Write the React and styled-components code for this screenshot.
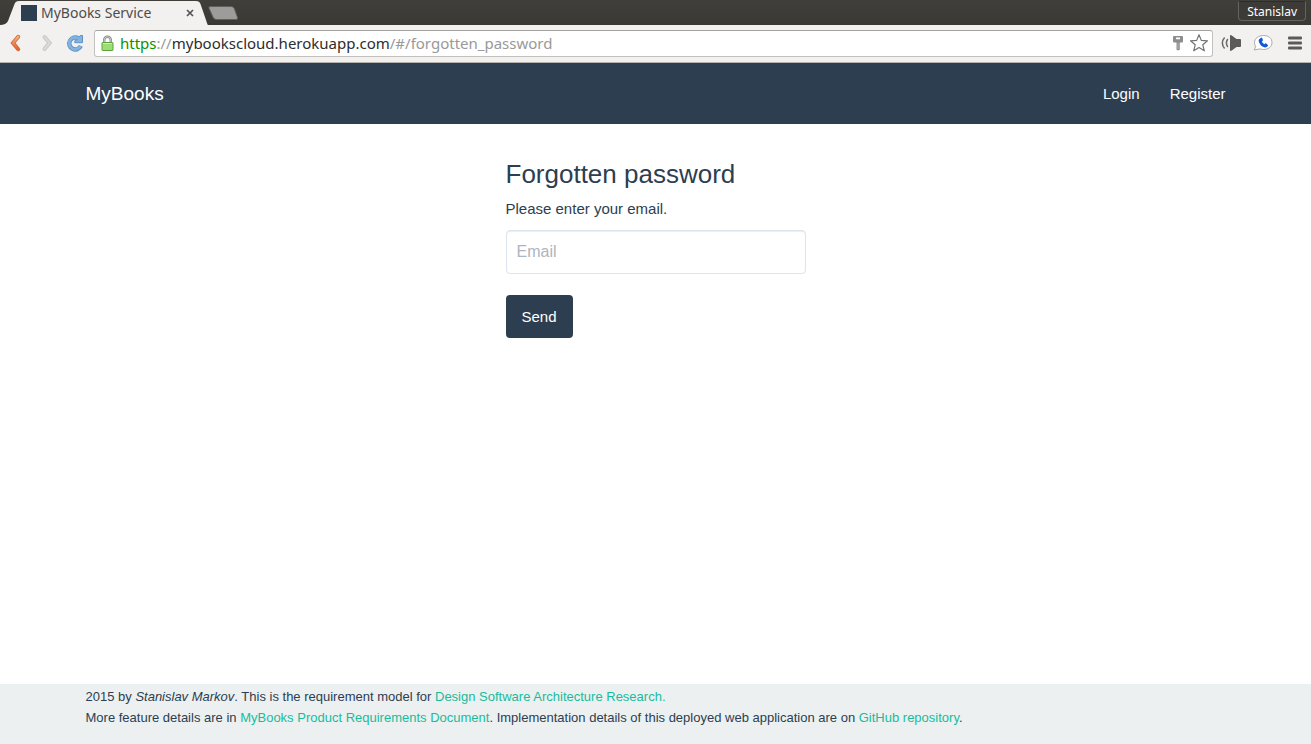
import React from "react";
import styled, { createGlobalStyle } from "styled-components";

const navy = "#2c3e50";
const uiFont = '"Noto Sans", "Open Sans", sans-serif';

const GlobalStyle = createGlobalStyle`
  *, *::before, *::after { box-sizing: border-box; }
  body {
    margin: 0;
    background: #fff;
    color: ${navy};
    font-family: "Liberation Sans", Arial, sans-serif;
    font-size: 15px;
    line-height: 21px;
  }
`;

const Window = styled.div`
  min-height: 100vh;
  display: flex;
  flex-direction: column;
`;

/* Browser frame */
const TabStrip = styled.div`
  display: flex;
  align-items: center;
  height: 25px;
  padding-right: 5px;
  background: linear-gradient(#403f3a, #3a3935);
  font-family: ${uiFont};
`;

const Tab = styled.div`
  position: relative;
  display: flex;
  align-items: center;
  width: 208px;
  height: 25px;
  padding: 1px 12px 0 21px;
  color: #4c4c4c;
`;

const TabShape = styled.svg`
  position: absolute;
  inset: 0;
`;

const Favicon = styled.span`
  position: relative;
  width: 16px;
  height: 16px;
  margin-right: 4px;
  background: ${navy};
`;

const TabTitle = styled.span`
  position: relative;
  flex: 1;
  font-size: 14px;
  line-height: 20px;
  white-space: nowrap;
`;

const IconButton = styled.button`
  position: relative;
  display: flex;
  align-items: center;
  justify-content: center;
  flex: none;
  width: ${(p) => p.$width || 20}px;
  height: 20px;
  padding: 0;
  border: 0;
  background: none;
`;

const ProfileButton = styled.button`
  height: 20px;
  margin: 0 0 3px auto;
  padding: 0 8px;
  border: 1px solid #65635d;
  border-top-color: #2d2c29;
  border-radius: 0 0 4px 4px;
  background: #3c3b37;
  color: #fff;
  font: 12px/20px ${uiFont};
`;

const Toolbar = styled.div`
  display: flex;
  align-items: center;
  height: 38px;
  padding: 0 6px 1px 5px;
  border-bottom: 1px solid #b5b3b0;
  background: #f2f1f0;
`;

const NavButtons = styled.div`
  display: flex;
  gap: 10px;
  margin-right: 9px;
`;

const AddressBar = styled.div`
  display: flex;
  align-items: center;
  flex: 1;
  min-width: 0;
  height: 27px;
  padding: 0 2px 0 6px;
  border: 1px solid #c3c1be;
  border-top-color: #a5a3a0;
  border-radius: 3px;
  background: #fff;
`;

const Url = styled.span`
  flex: 1;
  min-width: 0;
  margin-left: 6px;
  overflow: hidden;
  color: #999;
  font: 15px/24px ${uiFont};
  white-space: nowrap;
`;

const UrlScheme = styled.span`
  color: #079500;
`;

const UrlHost = styled.span`
  color: #2d2d2d;
`;

const Extensions = styled.div`
  display: flex;
  gap: 12px;
  margin-left: 8px;
`;

/* Page */
const Container = styled.div`
  width: 100%;
  max-width: 1170px;
  margin: 0 auto;
  padding: 0 15px;
`;

const Header = styled.header`
  background: ${navy};
`;

const HeaderRow = styled(Container)`
  display: flex;
  align-items: center;
  justify-content: space-between;
  height: 61px;
`;

const Brand = styled.a`
  color: #fff;
  font-size: 19px;
  text-decoration: none;
`;

const Nav = styled.nav`
  display: flex;
  gap: 30px;
`;

const NavLink = styled.a`
  color: #fff;
  text-decoration: none;
`;

const Main = styled.main`
  flex: 1;
  padding: 36px 15px;
`;

const Form = styled.form`
  max-width: 300px;
  margin: 0 auto;
`;

const Title = styled.h1`
  margin: 0 0 9px;
  font-size: 26px;
  font-weight: 400;
  line-height: 29px;
`;

const Label = styled.label`
  display: block;
  margin-bottom: 11px;
`;

const EmailInput = styled.input`
  display: block;
  width: 100%;
  height: 44px;
  margin-bottom: 21px;
  padding: 10px;
  border: 1px solid #dce4ec;
  border-radius: 4px;
  background: #fff;
  box-shadow: inset 0 1px 1px rgba(0, 0, 0, 0.075);
  color: ${navy};
  font: 16px/22px "Liberation Sans", Arial, sans-serif;

  &::placeholder {
    color: #acb6c0;
    opacity: 1;
  }
`;

const SubmitButton = styled.button`
  height: 43px;
  padding: 0 16px;
  border: 0;
  border-radius: 4px;
  background: ${navy};
  color: #fff;
  font: 15px/21px "Liberation Sans", Arial, sans-serif;
`;

const Footer = styled.footer`
  min-height: 60px;
  padding: 2px 0 16px;
  background: #ecf0f1;
  font-size: 13px;
`;

const FooterLine = styled.p`
  margin: 0;
`;

const FooterLink = styled.a`
  color: #18bc9c;
  text-decoration: none;
`;

const BackIcon = () => (
  <svg width="20" height="20" viewBox="0 0 20 20" fill="none" strokeLinecap="round">
    <defs>
      <linearGradient id="back" x1="0" y1="0" x2="0" y2="1">
        <stop offset="0" stopColor="#f3b080" />
        <stop offset="1" stopColor="#e8602a" />
      </linearGradient>
    </defs>
    <path d="M13.200 3.800 8 10l5.200 6.200" stroke="#cf6a38" strokeWidth="4" />
    <path d="M13.200 3.800 8 10l5.200 6.200" stroke="url(#back)" strokeWidth="2.400" />
  </svg>
);

const ForwardIcon = () => (
  <svg width="20" height="20" viewBox="0 0 20 20" fill="none" strokeLinecap="round">
    <path d="M9.500 4l5 6-5 6" stroke="#c4c2bf" strokeWidth="4" />
    <path d="M9.500 4l5 6-5 6" stroke="#dbd9d6" strokeWidth="2.600" />
  </svg>
);

const ReloadIcon = () => (
  <svg width="20" height="20" viewBox="0 0 20 20" fill="none">
    <path d="M15.800 12.800A6 6 0 1 1 13.500 5.400" stroke="#5f93c8" strokeWidth="4.400" />
    <path d="M17.500 2.500v7.200H9.800V7.800l3.500-1.800 2-3.500z" fill="#84b3e0" stroke="#5f93c8" strokeLinejoin="round" />
    <path d="M15.500 12.900A6 6 0 1 1 14.500 6.200" stroke="#84b3e0" strokeWidth="2.800" />
  </svg>
);

const LockIcon = () => (
  <svg width="13" height="17" viewBox="0 0 13 17" fill="none">
    <path d="M3.200 8V5a3.300 3.300 0 0 1 6.600 0v3" stroke="#858585" strokeWidth="2.400" />
    <path d="M3.200 8V5a3.300 3.300 0 0 1 6.600 0v3" stroke="#d5d5d5" strokeWidth="0.900" />
    <rect x="1" y="7.500" width="11" height="8" rx="0.600" fill="#9edc78" stroke="#5aa33c" />
    <path d="M2 8.500h9" stroke="#c6f0ab" />
  </svg>
);

const KeyIcon = () => (
  <svg width="12" height="18" viewBox="0 0 12 18">
    <path
      fillRule="evenodd"
      fill="#8d8d8d"
      d="M2 2h8q1 0 1 1v4q0 1.500-1 1.500H7.800V15.200q0 1-1 1H5.500q-1 0-1-1V8.500H2Q1 8.500 1 7V3q0-1 1-1zM4 3.600v1.600h4V3.600z"
    />
    <path d="M6 9v6" stroke="#b5b5b5" />
  </svg>
);

const StarIcon = () => (
  <svg width="20" height="20" viewBox="0 0 20 20">
    <path
      d="M10 1.700l2.300 5.700 6.200.4-4.700 4 1.500 6-5.300-3.300-5.300 3.300 1.500-6-4.700-4 6.200-.4z"
      fill="#fff"
      stroke="#737373"
      strokeWidth="1.200"
      strokeLinejoin="round"
    />
  </svg>
);

const SpeakerIcon = () => (
  <svg width="20" height="20" viewBox="0 0 20 20" fill="none">
    <path d="M9 3q0-1.500 1.800-.6L15.500 6H19q1 0 1 1v6q0 1-1 1h-3.500l-4.700 3.600Q9 18.500 9 17z" fill="#5b5b5b" />
    <path d="M6.800 6q-2.800 4 0 8" stroke="#6b6b6b" strokeWidth="1.500" />
    <path d="M3.600 4.500q-4.500 5.500 0 11" stroke="#6b6b6b" strokeWidth="1.500" />
  </svg>
);

const CallIcon = () => (
  <svg width="20" height="20" viewBox="0 0 20 20">
    <path
      d="M10.500 2.500c5 0 8.500 2.900 8.500 7s-3.500 7-8.500 7q-2 0-3.700-.6L1.300 17l1.300-3.600Q1.500 11.700 1.500 9.500c0-4.100 4-7 9-7z"
      fill="#fff"
      stroke="#aaa"
    />
    <path
      d="M6.100 6.200 8 4.700q.7-.3 1.100.4l.8 1.700q.2.700-.4 1.100l-.7.600q.7 1.800 2.500 2.700l.9-.7q.6-.4 1.100.1l1.500 1.300q.6.600 0 1.200-1.500 1.800-3.500 1.200-4.300-1.200-5.600-6-.2-1.100.4-2.100z"
      fill="#1558d6"
    />
  </svg>
);

const MenuIcon = () => (
  <svg width="14" height="14" viewBox="0 0 14 14" fill="#5a5a5a">
    <rect y="0.500" width="14" height="3" rx="1" />
    <rect y="5.500" width="14" height="3" rx="1" />
    <rect y="10.500" width="14" height="3" rx="1" />
  </svg>
);

export default function App() {
  return (
    <Window>
      <GlobalStyle />
      <TabStrip>
        <Tab>
          <TabShape width="208" height="25" viewBox="0 0 208 25" aria-hidden="true">
            <path
              d="M0 25Q6 25 8 21L14.500 4Q15.500 1 19 1H196Q199.500 1 200.500 4L206 20Q207.500 25 208 25z"
              fill="#f2f1f0"
            />
          </TabShape>
          <Favicon />
          <TabTitle>MyBooks Service</TabTitle>
          <IconButton $width={12} type="button" aria-label="Close tab">
            <svg width="8" height="8" viewBox="0 0 8 8" stroke="#555" strokeWidth="1.700">
              <path d="M1 1l6 6M7 1 1 7" />
            </svg>
          </IconButton>
        </Tab>
        <IconButton $width={31} type="button" aria-label="New tab">
          <svg width="31" height="16" viewBox="0 0 31 16">
            <path
              d="M2 1.500h21q2.500 0 3.300 2l3.200 9q.7 2-1.500 2H8.500q-2.500 0-3.300-2L1 3.300Q.4 1.500 2 1.500z"
              fill="#9d9c9a"
              stroke="#605f5b"
            />
          </svg>
        </IconButton>
        <ProfileButton type="button">Stanislav</ProfileButton>
      </TabStrip>
      <Toolbar>
        <NavButtons>
          <IconButton type="button" aria-label="Back"><BackIcon /></IconButton>
          <IconButton type="button" aria-label="Forward"><ForwardIcon /></IconButton>
          <IconButton type="button" aria-label="Reload"><ReloadIcon /></IconButton>
        </NavButtons>
        <AddressBar>
          <LockIcon />
          <Url>
            <UrlScheme>https</UrlScheme>://<UrlHost>mybookscloud.herokuapp.com</UrlHost>/#/forgotten_password
          </Url>
          <IconButton type="button" aria-label="Saved passwords"><KeyIcon /></IconButton>
          <IconButton $width={22} type="button" aria-label="Bookmark this page"><StarIcon /></IconButton>
        </AddressBar>
        <Extensions>
          <IconButton type="button" aria-label="Sound"><SpeakerIcon /></IconButton>
          <IconButton type="button" aria-label="Call"><CallIcon /></IconButton>
          <IconButton type="button" aria-label="Menu"><MenuIcon /></IconButton>
        </Extensions>
      </Toolbar>

      <Header>
        <HeaderRow>
          <Brand href="#/">MyBooks</Brand>
          <Nav>
            <NavLink href="#/login">Login</NavLink>
            <NavLink href="#/register">Register</NavLink>
          </Nav>
        </HeaderRow>
      </Header>
      <Main>
        <Form>
          <Title>Forgotten password</Title>
          <Label htmlFor="email">Please enter your email.</Label>
          <EmailInput id="email" type="email" placeholder="Email" />
          <SubmitButton type="submit">Send</SubmitButton>
        </Form>
      </Main>
      <Footer>
        <Container>
          <FooterLine>
            2015 by <em>Stanislav Markov</em>. This is the requirement model for{" "}
            <FooterLink href="#/research">Design Software Architecture Research.</FooterLink>
          </FooterLine>
          <FooterLine>
            More feature details are in{" "}
            <FooterLink href="#/requirements">MyBooks Product Requirements Document</FooterLink>. Implementation
            details of this deployed web application are on{" "}
            <FooterLink href="#/repository">GitHub repository</FooterLink>.
          </FooterLine>
        </Container>
      </Footer>
    </Window>
  );
}
